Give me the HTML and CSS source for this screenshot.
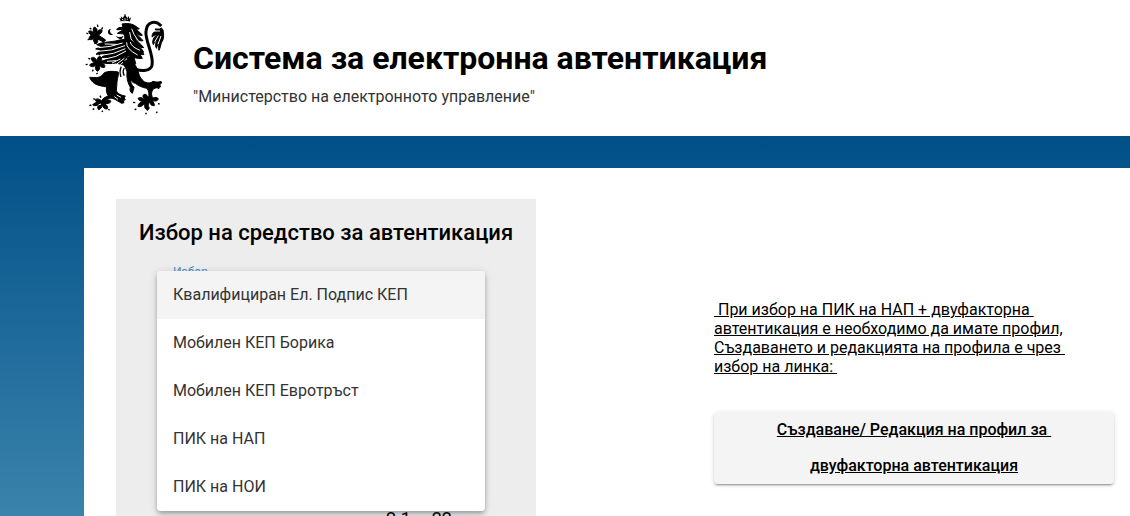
FILE: index.html
```html
<!DOCTYPE html>
<html lang="bg">
<head>
<meta charset="utf-8">
<meta name="viewport" content="width=device-width, initial-scale=1">
<title>Система за електронна автентикация</title>
<link rel="stylesheet" href="styles.css">
</head>
<body>
<header class="header">
  <svg class="crest" viewBox="0 0 276 336" role="img" aria-label="Герб">
    <!-- crown -->
    <path d="M118 29l6 3-2-7 6 5 5-7v-4h4v4l5 7 5-6 0 8 6-4-4 14c-8-3-18-3-26 0z"/>
    <path class="gap" d="M121 42q13-6 28 0M128 33v3M135 31v4M142 32v3"/>
    <!-- head and mane -->
    <path class="bold" d="M126 48c10-2 22-2 30 1 10 3 14 9 22 13-3 2-7 2-10 0 4 8 13 10 19 20-7 2-13-3-18-8 3 10 14 15 20 24-9 3-19-5-24-12 3 14 18 21 26 33-12 0-23-6-29-14 6 17 21 22 30 34-14 4-31-4-39-16l-18-14-24 4-27 3c12-8 24-12 38-14 10-2 14-8 12-18-1-8-9-6-22-8l13-8c6-3 4-13 1-20z"/>
    <path d="M108 64l8-6 12-2 8 6-12 4-12 1zM107 84q12 7 24-1l-5 9q-10 5-19-8z"/>
    <path class="gap" d="M155 62q5 17 18 34M149 72q0 22 16 38"/>
    <!-- tongue -->
    <path d="M93 62c-5 6-4 14 7 17-9 5-17-1-16-8 0-5 4-9 9-9z"/>
    <!-- raised paw -->
    <path class="bold" d="M26 70c6-3 12-1 15 6 0-7-4-13 2-19 8 3 10 10 7 18 4-9 8-11 16-9 1 8-5 12-11 15 6 5 14 9 22 15l-6 6-20-10c4 7 3 12-3 15-7-3-9-9-6-18-4 6-9 8-15 4 0-7 4-11 10-12-5 1-9-4-11-11z"/>
    <path class="claw" d="M19 75l6 3M29 60l5 4M52 50l2 7M68 58l-3 6M23 96l6-3M43 107l3-3"/>
    <!-- feathered shoulder and chest -->
    <path class="bold" d="M60 106c18-5 40-4 59-10 20-4 36-1 45 10 9 12 23 13 27 27-9 2-18-1-24-6 5 10 16 12 20 24-17 3-30-6-42-7-18 2-31 15-51 18l-20-4 17-10-27 1 14-12-30 2 15-14-16-2 18-8-15-5z"/>
    <path class="gap" d="M55 119q35-1 73-14M55 130q40 0 80-17M63 142q38-2 73-20M77 153q31-4 61-24M74 108l36 1M140 103q-2 20 33 38M151 102q2 14 29 25"/>
    <!-- lower forearm and paw -->
    <path class="bold" d="M162 148c-20-3-36 0-51 7-13 5-24 3-35 1l-13 4c4-8 2-14-5-15-5 3-7 8-7 15-3-9-9-14-16-11-2 8 3 13 11 16-8 0-15 1-17 7 5 6 12 5 19-1-2 8-3 14 4 19 7-3 8-10 7-18 5 7 11 9 16 4 0-6-5-10-11-12 16 3 30 4 43 1 10 3 23 4 32 10 12 4 22 2 28-8z"/>
    <path class="gap" d="M96 165l25-12M109 169l24-18M121 170l20-18M81 160l27-2"/>
    <path class="claw" d="M17 170l6-1M25 151l6 2M37 190l3-5M58 137v5M69 176l3 3M49 198l4-3"/>
    <!-- torso, far hind leg and foot -->
    <path class="bold" d="M130 159c16-1 28 4 37 14l8 19c4 16 9 22 19 30 11 5 19 3 25-2 9 3 17 3 24 0l2 5-6 5 3 6-6 3 1 3-6-3c-8 1-13 4-15 11-3 7-1 15 3 20 7-2 13-3 16 3-3 7-11 8-18 4 3 7 7 10 6 16-8 1-13-4-15-12-4 8-5 13 0 19l-5 7c-9-4-11-12-8-22-6 8-13 13-21 10 0-8 7-13 17-15-8 0-14-1-17-9 6-5 14 0 20 3-6-6-7-11-2-15 9-1 11 6 13 12 3-11 3-20-4-30-13-2-25-7-35-15-9-2-14-8-16-15 1 12 5 20 12 27-1 7-3 13-5 18-7-4-8-10-6-18-8-13-12-31-10-47-3-10-7-15-9-21z"/>
    <path class="claw" d="M159 283l7 1M164 306l5-4M181 269l5 3M229 315l3-4M234 287l5 1M197 314l2 5"/>
    <!-- near hind leg -->
    <path class="bold" d="M115 192c-16-3-29-3-42 2-5 8-12 13-22 15-9 0-14-1-22-1 3 8 8 14 15 19 13 7 24 7 36 10-2 9-1 18 5 27-9 3-17 7-20 14-8-5-15-8-18-2 0 5 5 8 11 8-9-1-16 0-20 7 7 4 14 2 20-3-5 7-7 11-2 17 7-2 10-7 10-15 3 9 8 14 16 13 3-7-2-12-9-17 9 2 17 1 20-6-3-4-8-5-13-4 7-7 16-6 25-2l20 12 7-2-2-6 6-3-4-5 4-6c-13-2-24-7-27-17 2-15 1-32 6-45z"/>
    <path class="gap" d="M103 266l11 8M110 261l13 7M55 291l8-3"/>
    <path class="claw" d="M124 176c-5 10-5 20-1 31M133 180c-6 9-4 16 0 23M40 272l7 3M28 293l6-2M38 305l5-3M60 263l3 6M66 312l2-4M85 304l4 3"/>
    <!-- tail and tuft -->
    <path class="tail" d="M168 184c17 6 43 6 48-12 7-31-22-74-18-103 3-27 27-35 46-15"/>
    <path class="bold" d="M225 63h15l4-3 5 5c3 15 3 30-5 39-2 9-4 17-7 23-2-6-2-13 0-19-5 4-7 8-7 13-6-6-4-16 2-24-6 4-10 8-12 13-5-11 1-22 10-29-6 0-9 2-14 6 0-10 5-16 13-19z"/>
    <path class="gap" d="M220 69l20 0M235 83l-11 19M243 84l-9 25"/>
  </svg>
  <div class="titles">
    <h1 class="title">Система за електронна автентикация</h1>
    <p class="subtitle">"Министерство на електронното управление"</p>
  </div>
</header>
<main class="page">
  <div class="content">
    <section class="card">
      <h2 class="card-title">Избор на средство за автентикация</h2>
      <div class="field">
        <span class="field-label" id="choice-label">Избор</span>
        <div class="menu" role="listbox" aria-labelledby="choice-label">
          <button class="option active" type="button" role="option" aria-selected="true">Квалифициран Ел. Подпис КЕП</button>
          <button class="option" type="button" role="option" aria-selected="false">Мобилен КЕП Борика</button>
          <button class="option" type="button" role="option" aria-selected="false">Мобилен КЕП Евротръст</button>
          <button class="option" type="button" role="option" aria-selected="false">ПИК на НАП</button>
          <button class="option" type="button" role="option" aria-selected="false">ПИК на НОИ</button>
        </div>
      </div>
      <p class="version">2.1 – 22</p>
    </section>
    <section class="info">
      <p class="note">&nbsp;При избор на ПИК на НАП + двуфакторна&nbsp;<br>автентикация е необходимо да имате профил,<br>Създаването и редакцията на профила е чрез&nbsp;<br>избор на линка:&nbsp;</p>
      <a class="profile-link" href="#profile">Създаване/ Редакция на профил за&nbsp;<br>двуфакторна автентикация</a>
    </section>
  </div>
</main>
</body>
</html>
```
FILE: styles.css
```css
* { box-sizing: border-box; }
html, body { height: 100%; }
body {
  margin: 0;
  display: flex;
  flex-direction: column;
  overflow: hidden;
  font-family: Roboto, "Liberation Sans", sans-serif;
  font-size: 16px;
  color: #000;
  background: #fff;
}
h1, h2, p { margin: 0; }
.header {
  flex: none;
  display: flex;
  align-items: flex-start;
  gap: 21px;
  padding: 8px 80px 16px;
}
.crest { flex: none; width: 92px; height: 112px; }
.crest .bold { stroke: #000; stroke-width: 3; stroke-linejoin: round; }
.crest .gap { fill: none; stroke: #fff; stroke-width: 3; }
.crest .claw { fill: none; stroke: #000; stroke-width: 4; }
.crest .tail { fill: none; stroke: #000; stroke-width: 9; }
.titles { padding-top: 30px; }
.title { font-size: 32px; line-height: 40px; font-weight: 700; }
.subtitle { margin-top: 9px; line-height: 20px; color: #333; }
.page {
  flex: 1;
  min-height: 0;
  padding: 32px 0 0 84px;
  background: linear-gradient(#004f87, #3a83ac);
}
.content {
  display: flex;
  align-items: flex-start;
  min-height: 100%;
  padding: 31px 16px 0 32px;
  background: #fff;
}
.card { flex: none; width: 420px; padding: 20px 0; background: #ededed; }
.card-title { font-size: 22px; line-height: 28px; font-weight: 500; text-align: center; }
.field { position: relative; height: 243px; margin: 17px 51px 0 41px; }
.field-label { display: block; padding: 0 16px; font-size: 12px; line-height: 16px; color: #4a90c8; }
.menu {
  position: absolute;
  top: 7px;
  left: 0;
  right: 0;
  border-radius: 4px;
  overflow: hidden;
  background: #fff;
  box-shadow: 0 2px 4px -1px rgba(0,0,0,.2), 0 4px 5px rgba(0,0,0,.14), 0 1px 10px rgba(0,0,0,.12);
}
.option {
  display: block;
  width: 100%;
  height: 48px;
  padding: 0 16px 2px;
  border: 0;
  font: inherit;
  text-align: left;
  color: #333;
  background: #fff;
}
.option.active { background: #f4f4f4; }
.version { padding-left: 270px; font-size: 18px; line-height: 24px; }
.info { flex: 1; padding: 101px 0 0 178px; }
.note { line-height: 19px; text-decoration: underline; white-space: nowrap; }
.profile-link {
  display: block;
  margin-top: 36px;
  border-radius: 4px;
  background: #f4f4f4;
  color: #000;
  font-weight: 500;
  line-height: 36px;
  text-align: center;
  box-shadow: 0 3px 1px -2px rgba(0,0,0,.2), 0 2px 2px rgba(0,0,0,.14), 0 1px 5px rgba(0,0,0,.12);
}
```
